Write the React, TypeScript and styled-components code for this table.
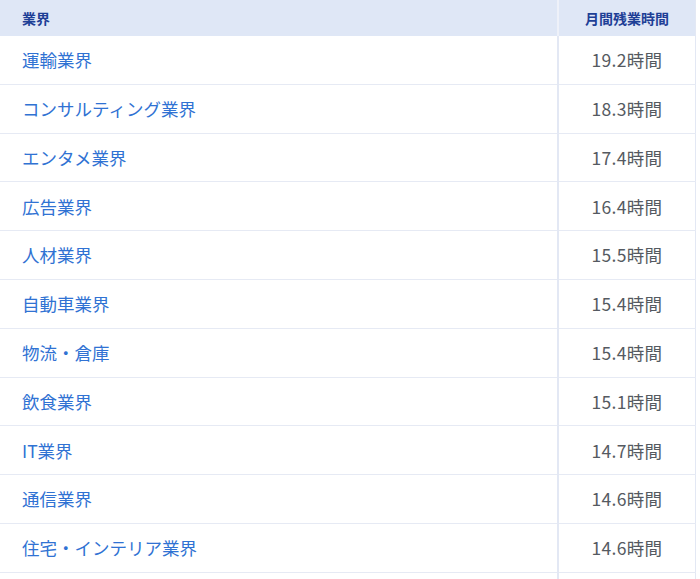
import React, { ReactElement } from 'react';
import styled, { createGlobalStyle } from 'styled-components';

interface Row {
    industry: string;
    hours: string;
}

const rows: Array<Row> = [
    { industry: '運輸業界', hours: '19.2時間' },
    { industry: 'コンサルティング業界', hours: '18.3時間' },
    { industry: 'エンタメ業界', hours: '17.4時間' },
    { industry: '広告業界', hours: '16.4時間' },
    { industry: '人材業界', hours: '15.5時間' },
    { industry: '自動車業界', hours: '15.4時間' },
    { industry: '物流・倉庫', hours: '15.4時間' },
    { industry: '飲食業界', hours: '15.1時間' },
    { industry: 'IT業界', hours: '14.7時間' },
    { industry: '通信業界', hours: '14.6時間' },
    { industry: '住宅・インテリア業界', hours: '14.6時間' },
    { industry: '', hours: '' },
];

const GlobalStyle = createGlobalStyle`
    html, body {
        margin: 0;
        padding: 0;
        background: #ffffff;
        font-family: "Noto Sans CJK JP", "Noto Sans", sans-serif;
    }
`;

const Table = styled.table`
    width: 696px;
    border-collapse: collapse;
    table-layout: fixed;
    border-right: 1px solid #e3e8f4;
`;

const HeadCell = styled.th<{ $align: 'left' | 'center' }>`
    height: 36px;
    padding: 0 0 0 ${({ $align }): string => ($align === 'left' ? '22px' : '0')};
    background-color: #dfe7f6;
    color: #1e3f96;
    font-size: 14px;
    font-weight: 700;
    text-align: ${({ $align }): string => $align};
    border-left: ${({ $align }): string => ($align === 'center' ? '2px solid #eef1f9' : 'none')};
`;

const Tr = styled.tr`
    border-bottom: 1px solid #e6eaf4;
`;

const NameCell = styled.td`
    height: 47.8px;
    padding: 0 0 0 22px;
    color: #3072d3;
    font-size: 17.5px;
    line-height: 1;
`;

const HoursCell = styled.td`
    height: 47.8px;
    padding: 0;
    text-align: center;
    color: #555a61;
    font-size: 17.5px;
    letter-spacing: 0.3px;
    line-height: 1;
    border-left: 2px solid #e3e8f4;
`;

const App = (): ReactElement => {
    return (
        <>
            <GlobalStyle />
            <Table>
                <colgroup>
                    <col style={{ width: '558px' }} />
                    <col />
                </colgroup>
                <thead>
                    <tr>
                        <HeadCell $align="left">業界</HeadCell>
                        <HeadCell $align="center">月間残業時間</HeadCell>
                    </tr>
                </thead>
                <tbody>
                    {rows.map((r, i) => (
                        <Tr key={i}>
                            <NameCell>{r.industry}</NameCell>
                            <HoursCell>{r.hours}</HoursCell>
                        </Tr>
                    ))}
                </tbody>
            </Table>
        </>
    );
};

export default App;
